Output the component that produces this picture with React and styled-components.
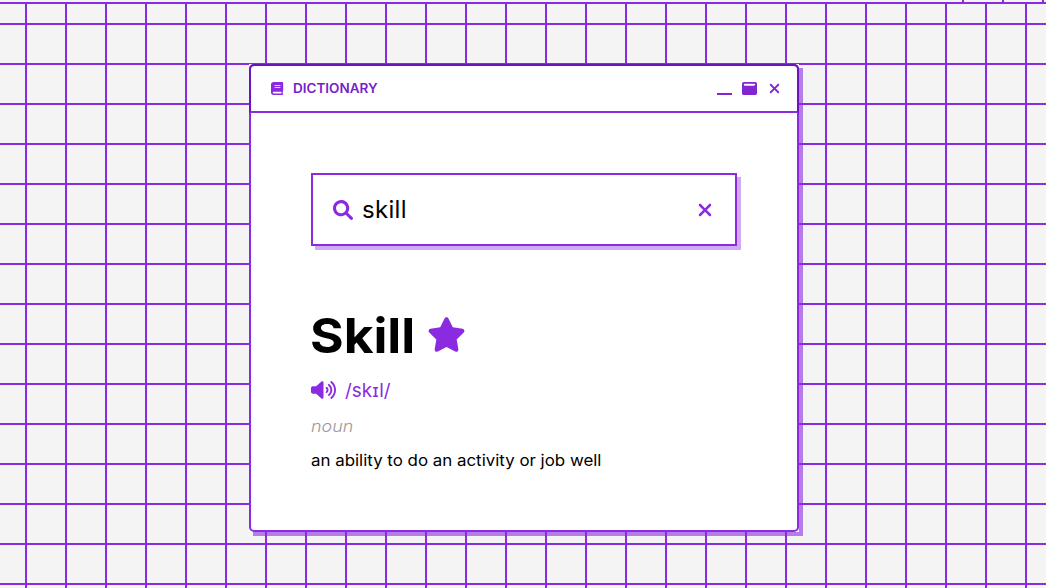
import React from "react";
import styled, { createGlobalStyle } from "styled-components";
import { FaStar, FaWindowMaximize, FaXmark } from "react-icons/fa6";

const purple = "#8a2be2";

const GlobalStyle = createGlobalStyle`
  * { box-sizing: border-box; }
  body { margin: 0; font-family: Inter, "DejaVu Sans", sans-serif; color: #000; overflow: hidden; }
`;

const Desktop = styled.main`
  position: relative;
  height: 588px;
  padding-top: 64px;
  padding-left: 249px;
  background-color: #f4f4f4;
  background-image:
    linear-gradient(#f4f4f4, #f4f4f4),
    linear-gradient(${purple}, ${purple}),
    linear-gradient(${purple} 2px, transparent 2px),
    linear-gradient(90deg, ${purple} 2px, transparent 2px);
  background-size: 100% 2px, 100% 2px, 40px 40px, 40px 40px;
  background-position: 0 0, 0 2px, 25px 23px, 25px 0;
  background-repeat: no-repeat, no-repeat, repeat, repeat;
`;

const UpperGrid = styled.div`
  position: absolute;
  top: 0;
  right: 0;
  width: 84px;
  height: 2px;
  background: repeating-linear-gradient(90deg, ${purple} 0 2px, transparent 2px 40px);
`;

const WindowBase = styled.section`
  width: 550px;
  height: 468px;
  background: #fff;
  box-shadow: 4px 4px 0 rgba(138, 43, 226, 0.6);
`;

const WindowFrame = styled.div`
  height: 100%;
  border: 2px solid ${purple};
  border-radius: 5px;
`;

const TitleBar = styled.header`
  display: flex;
  align-items: center;
  justify-content: space-between;
  width: 550px;
  height: 49px;
  margin: -2px 0 0 -2px;
  padding: 0 15px 1px 19px;
  border: 2px solid #6c14bd;
  border-bottom-color: ${purple};
  border-radius: 5px 5px 0 0;
  color: ${purple};
`;

const WideText = styled.span`
  display: inline-block;
  transform: scaleX(${(p) => p.$scale});
  transform-origin: left center;
`;

const Title = styled.h2`
  display: flex;
  align-items: center;
  gap: 9px;
  margin: 0;
  color: #7622c8;
  font-size: 12.5px;
  font-weight: 600;
  line-height: 16px;
  svg { color: ${purple}; }
  span { padding-top: 2px; }
`;

const Controls = styled.div`
  display: flex;
  align-items: center;
  gap: 10px;
  color: #8026d3;
`;

const Minimize = styled.span`
  width: 15px;
  height: 2px;
  margin-top: 11px;
  background: currentColor;
`;

const Content = styled.div`
  padding: 60px;
`;

const Search = styled.div`
  display: flex;
  align-items: center;
  width: 426px;
  height: 73px;
  padding: 0 20px;
  border: 2px solid ${purple};
  box-shadow: 4px 4px 0 rgba(138, 43, 226, 0.4);
  color: ${purple};
`;

const Query = styled.span`
  flex: 1;
  margin-left: 9px;
  color: #000;
  font-size: 24px;
  line-height: 30px;
  font-weight: 400;
  letter-spacing: 0.3px;
`;

const Entry = styled.article`
  padding-top: 59px;
`;

const Word = styled.h1`
  display: flex;
  align-items: center;
  gap: 19px;
  height: 60px;
  margin: 0;
  font-size: 48px;
  font-weight: 700;
  span { margin-left: -1px; }
  svg { margin-bottom: 1px; color: ${purple}; }
`;

const Pronunciation = styled.div`
  display: flex;
  align-items: center;
  gap: 9px;
  height: 24px;
  margin-top: 13px;
  color: ${purple};
  font-size: 18.5px;
  font-weight: 400;
`;

const Kind = styled.div`
  margin-top: 14px;
  color: #999;
  font-size: 16px;
  line-height: 20px;
  font-style: italic;
  font-weight: 300;
`;

const Meaning = styled.p`
  margin: 14px 0 0;
  font-size: 16px;
  line-height: 20px;
  white-space: nowrap;
`;

function Book() {
  return (
    <svg width="14" height="13" viewBox="0 0 448 512" fill="currentColor" preserveAspectRatio="none">
      <path d="M448 336v-288C448 21.49 426.5 0 400 0H96C42.98 0 0 42.98 0 96v320c0 53.02 42.98 96 96 96h320c17.67 0 32-14.33 32-31.1c0-11.72-6.607-21.52-16-27.1v-81.36C441.8 362.8 448 350.2 448 336zM143.1 128h192C344.8 128 352 135.2 352 144C352 152.8 344.8 160 336 160H143.1C135.2 160 128 152.8 128 144C128 135.2 135.2 128 143.1 128zM143.1 192h192C344.8 192 352 199.2 352 208C352 216.8 344.8 224 336 224H143.1C135.2 224 128 216.8 128 208C128 199.2 135.2 192 143.1 192zM384 448H96c-17.67 0-32-14.33-32-32c0-17.67 14.33-32 32-32h288V448z" transform="translate(32 0) scale(0.87 1)" />
    </svg>
  );
}

function Magnifier() {
  return (
    <svg width="20" height="20" viewBox="0 0 512 512" fill="currentColor">
      <path d="M500.3 443.7l-119.7-119.7c27.22-40.41 40.65-90.9 33.46-144.7C401.8 87.79 326.8 13.32 235.2 1.723C99.01-15.51-15.51 99.01 1.724 235.2c11.6 91.64 86.08 166.7 177.6 178.9c53.8 7.189 104.3-6.236 144.7-33.46l119.7 119.7c15.62 15.62 40.95 15.62 56.57 0C515.9 484.7 515.9 459.3 500.3 443.7zM79.1 208c0-70.58 57.42-128 128-128s128 57.42 128 128c0 70.58-57.42 128-128 128S79.1 278.6 79.1 208z" />
    </svg>
  );
}

function Speaker() {
  return (
    <svg width="25" height="20" viewBox="0 0 640 512" fill="currentColor">
      <path d="M412.6 182c-10.28-8.334-25.41-6.867-33.75 3.402c-8.406 10.24-6.906 25.35 3.375 33.74C393.5 228.4 400 241.8 400 255.1c0 14.17-6.5 27.59-17.81 36.83c-10.28 8.396-11.78 23.5-3.375 33.74c4.719 5.806 11.62 8.802 18.56 8.802c5.344 0 10.75-1.779 15.19-5.399C435.1 311.5 448 284.6 448 255.1S435.1 200.4 412.6 182zM473.1 108.2c-10.22-8.334-25.34-6.898-33.78 3.34c-8.406 10.24-6.906 25.35 3.344 33.74C476.6 172.1 496 213.3 496 255.1s-19.44 82.1-53.31 110.7c-10.25 8.396-11.75 23.5-3.344 33.74c4.75 5.775 11.62 8.771 18.56 8.771c5.375 0 10.75-1.779 15.22-5.431C518.2 366.9 544 313 544 255.1S518.2 145 473.1 108.2zM534.4 33.4c-10.22-8.334-25.34-6.867-33.78 3.34c-8.406 10.24-6.906 25.35 3.344 33.74C559.9 116.3 592 183.9 592 255.1s-32.09 139.7-88.06 185.5c-10.25 8.396-11.75 23.5-3.344 33.74C505.3 481.2 512.2 484.2 519.2 484.2c5.375 0 10.75-1.779 15.22-5.431C601.5 423.6 640 342.5 640 255.1S601.5 88.34 534.4 33.4zM301.2 34.98c-11.5-5.181-25.01-3.076-34.43 5.29L131.8 160.1H48c-26.51 0-48 21.48-48 47.96v95.92c0 26.48 21.49 47.96 48 47.96h83.84l134.9 119.8C272.7 477 280.3 479.8 288 479.8c4.438 0 8.959-.9314 13.16-2.835C312.7 471.8 320 460.4 320 447.9V64.12C320 51.55 312.7 40.13 301.2 34.98z" />
    </svg>
  );
}

export default function App() {
  return (
    <Desktop>
      <GlobalStyle />
      <UpperGrid />
      <WindowBase>
        <WindowFrame>
          <TitleBar>
            <Title><Book /><WideText $scale={1.08}>DICTIONARY</WideText></Title>
            <Controls>
              <Minimize />
              <FaWindowMaximize size={15} />
              <FaXmark size={15} />
            </Controls>
          </TitleBar>
          <Content>
            <Search>
              <Magnifier />
              <Query>skill</Query>
              <FaXmark size={20} />
            </Search>
            <Entry>
              <Word><WideText $scale={1.07}>Skill</WideText><FaStar size={39} /></Word>
              <Pronunciation><Speaker /><WideText $scale={1.02}>/skɪl/</WideText></Pronunciation>
              <Kind><WideText $scale={1.12}>noun</WideText></Kind>
              <Meaning><WideText $scale={1.055}>an ability to do an activity or job well</WideText></Meaning>
            </Entry>
          </Content>
        </WindowFrame>
      </WindowBase>
    </Desktop>
  );
}
